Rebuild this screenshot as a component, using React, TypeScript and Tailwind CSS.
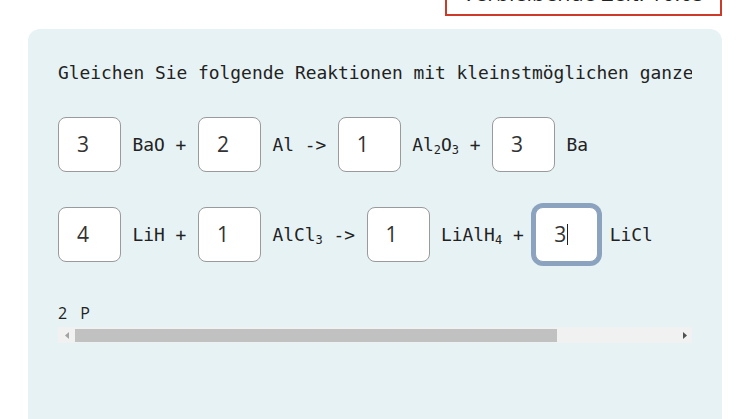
type Part = { text: string; sub?: string };
type Term = { coef: string; parts: Part[]; after: string; focused?: boolean };

const reactions: Term[][] = [
  [
    { coef: "3", parts: [{ text: "BaO" }], after: "+" },
    { coef: "2", parts: [{ text: "Al" }], after: "->" },
    { coef: "1", parts: [{ text: "Al", sub: "2" }, { text: "O", sub: "3" }], after: "+" },
    { coef: "3", parts: [{ text: "Ba" }], after: "" },
  ],
  [
    { coef: "4", parts: [{ text: "LiH" }], after: "+" },
    { coef: "1", parts: [{ text: "AlCl", sub: "3" }], after: "->" },
    { coef: "1", parts: [{ text: "LiAlH", sub: "4" }], after: "+" },
    { coef: "3", parts: [{ text: "LiCl" }], after: "", focused: true },
  ],
];

const mono = "font-['DejaVu_Sans_Mono','Liberation_Mono',monospace]";

function CoefBox({ value, focused }: { value: string; focused?: boolean }) {
  return (
    <div
      className={`flex h-[55px] w-[63px] shrink-0 items-center rounded-lg bg-white pl-[18px] font-['Open_Sans','Noto_Sans',sans-serif] text-[21px] text-[#333] ${
        focused ? "border border-[#8ba3bf] ring-4 ring-[#8ba3bf]" : "border border-[#9a9a9a]"
      }`}
    >
      <span>{value}</span>
      {focused ? <span className="ml-px h-[21px] w-px bg-[#222]" /> : null}
    </div>
  );
}

function Reaction({ terms }: { terms: Term[] }) {
  return (
    <div className="flex items-center">
      {terms.map((term, i) => (
        <div key={i} className="flex items-center">
          <CoefBox value={term.coef} focused={term.focused} />
          <span className={`mx-[11.5px] whitespace-pre ${mono} text-[17.9px] leading-[27px] text-[#222]`}>
            {term.parts.map((p, j) => (
              <span key={j}>
                {p.text}
                {p.sub ? <sub className="text-[12px]">{p.sub}</sub> : null}
              </span>
            ))}
            {term.after ? ` ${term.after}` : ""}
          </span>
        </div>
      ))}
    </div>
  );
}

function FakeScrollbar() {
  return (
    <div className="mt-[2px] flex h-4 w-full items-start bg-[#f1f1f1]">
      <div className="flex h-4 w-[17px] shrink-0 items-center justify-center">
        <svg width="4" height="7" viewBox="0 0 4 7">
          <path d="M4 0 L0 3.5 L4 7 Z" fill="#a3a3a3" />
        </svg>
      </div>
      <div className="mt-[2px] h-[13px] w-[482px] bg-[#c1c1c1]" />
      <div className="flex-1" />
      <div className="flex h-4 w-[15px] shrink-0 items-center justify-center">
        <svg width="4" height="7" viewBox="0 0 4 7">
          <path d="M0 0 L4 3.5 L0 7 Z" fill="#505050" />
        </svg>
      </div>
    </div>
  );
}

export default function App() {
  return (
    <div className="h-[419px] w-[744px] overflow-hidden bg-white">
      <div className="flex justify-end pr-[22px]">
        <div className="-mt-[29px] w-[277px] whitespace-nowrap border-2 border-[#cc3a2a] pt-2 pb-[9px] text-center font-['Open_Sans','Noto_Sans',sans-serif] text-[21.5px] leading-6 text-[#222]">
          Verbleibende Zeit: 10:05
        </div>
      </div>
      <section className="ml-[28px] mt-[13px] h-[420px] w-[694px] rounded-xl bg-[#e7f2f4] px-[30px] pt-[30px]">
        <div className="overflow-hidden">
          <p className={`whitespace-nowrap ${mono} text-[17.9px] leading-[27px] text-[#222]`}>
            Gleichen Sie folgende Reaktionen mit kleinstmöglichen ganzen Zahlen aus.
          </p>
          <div className="mt-[31px]">
            <Reaction terms={reactions[0]} />
          </div>
          <div className="mt-[35px]">
            <Reaction terms={reactions[1]} />
          </div>
          <p className="mt-[39px] font-['Open_Sans','Noto_Sans',sans-serif] text-[16px] leading-6 text-[#222]">
            2<span className="ml-[13px]">P</span>
          </p>
        </div>
        <FakeScrollbar />
      </section>
    </div>
  );
}
